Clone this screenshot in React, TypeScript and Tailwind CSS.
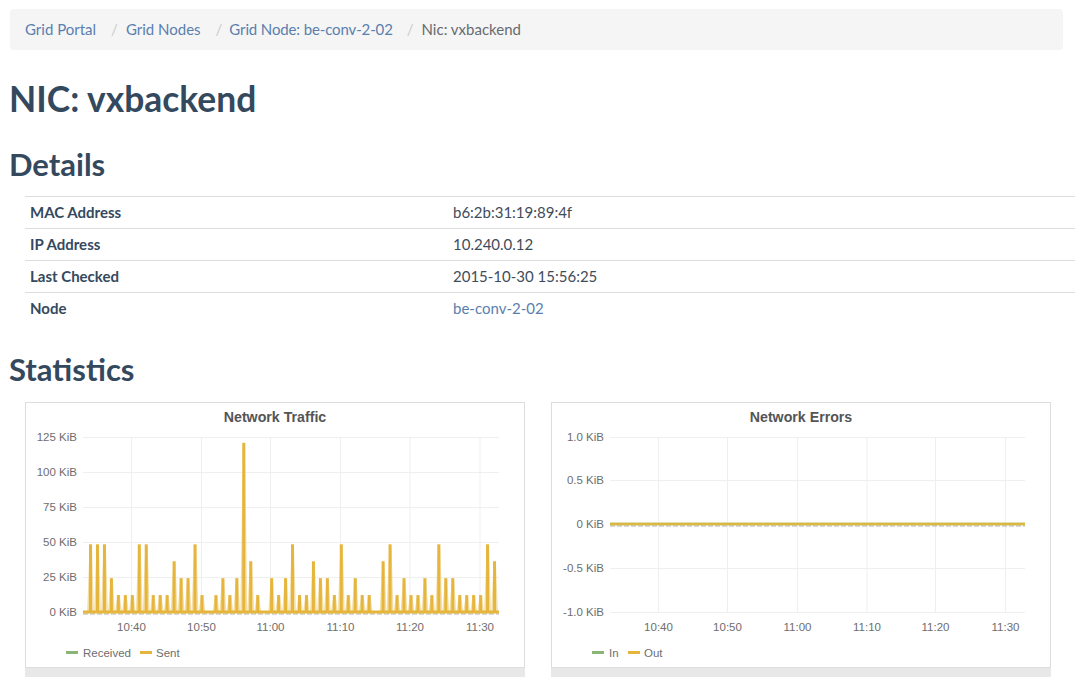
const crumbs = [
  { label: 'Grid Portal', cls: 'pr-[8px] pl-[15px]', link: '' },
  { label: 'Grid Nodes', cls: 'pr-[7px] pl-[15px]', link: '' },
  { label: 'Grid Node: be-conv-2-02', cls: 'pr-[8px] pl-[14px]', link: 'tracking-[-0.13px]' },
];

const rows: [string, string, boolean?][] = [
  ['MAC Address', 'b6:2b:31:19:89:4f'],
  ['IP Address', '10.240.0.12'],
  ['Last Checked', '2015-10-30 15:56:25'],
  ['Node', 'be-conv-2-02', true],
];

// one value per sample, in KiB, read off the reference chart
const traffic = [
  48, 48, 48, 24, 12, 12, 12, 48, 48, 12, 12, 12, 36, 24, 24, 48, 12, 0, 12, 24, 12, 24, 120, 36, 12, 0, 24, 12, 24, 48,
  12, 12, 36, 24, 24, 12, 48, 12, 24, 12, 12, 0, 36, 48, 12, 24, 12, 12, 24, 12, 48, 24, 24, 12, 12, 12, 12, 48, 36,
];

const YELLOW = '#e6b63c';
const GREEN = '#8ab574';
const TEXT = '#6e6e6e';
const GRID = '#efefef';

type ChartProps = {
  title: string;
  yTicks: { label: string; y: number }[];
  xTicks: number[];
  left: number;
  right: number;
  legend: { label: string; color: string; x: number; textX: number }[];
  children: React.ReactNode;
};

const timeLabels = ['10:40', '10:50', '11:00', '11:10', '11:20', '11:30'];

function Chart({ title, yTicks, xTicks, left, right, legend, children }: ChartProps) {
  return (
    <div className="w-[500px] shrink-0 bg-[#e8e8e8] pb-[9px]">
      <div className="h-[266px] border border-[#dddddd] bg-white">
        <div className="h-[20px] pt-[8px] text-center font-['Liberation_Sans',sans-serif] text-[14.2px] leading-[13px] font-bold text-[#555555]">
          {title}
        </div>
        <svg width="498" height="244" className="block font-['Liberation_Sans',sans-serif]">
          {yTicks.map((t) => (
            <g key={t.label}>
              <line x1={left} x2={right} y1={t.y} y2={t.y} stroke={GRID} />
              <text x={left - 6} y={t.y + 3.5} textAnchor="end" fontSize="11.5" fill={TEXT}>
                {t.label}
              </text>
            </g>
          ))}
          {xTicks.map((x, i) => (
            <g key={x}>
              <line x1={x} x2={x} y1={yTicks[0].y} y2={yTicks[yTicks.length - 1].y} stroke={GRID} />
              <text x={x} y="208" textAnchor="middle" fontSize="11.5" fill={TEXT}>
                {timeLabels[i]}
              </text>
            </g>
          ))}
          {children}
          {legend.map((l) => (
            <g key={l.label}>
              <line x1={l.x} x2={l.x + 12} y1="229.5" y2="229.5" stroke={l.color} strokeWidth="3" />
              <text x={l.textX} y="234" fontSize="11.5" fill={TEXT}>
                {l.label}
              </text>
            </g>
          ))}
        </svg>
      </div>
    </div>
  );
}

function TrafficSeries() {
  const base = 189;
  return (
    <g>
      <line x1="57" x2="473" y1={base + 2} y2={base + 2} stroke="#b0b0b0" strokeWidth="1.2" strokeDasharray="5 2" />
      {traffic.map((v, i) => {
        if (!v) return null;
        const x = 64.5 + i * 6.966;
        const top = base - v * 1.41;
        return (
          <g key={i}>
            <polygon
              points={`${x - 3.4},${base} ${x - 1.4},${top + v * 0.3} ${x + 1.4},${top} ${x + 3.4},${base}`}
              fill={YELLOW}
              opacity="0.45"
            />
            <line x1={x} x2={x} y1={base} y2={top} stroke={YELLOW} strokeWidth="3" />
          </g>
        );
      })}
      <line x1="57" x2="473" y1={base} y2={base} stroke={YELLOW} strokeWidth="3" />
    </g>
  );
}

function ErrorSeries() {
  return (
    <g>
      <line x1="58" x2="473" y1="103" y2="103" stroke="#b0b0b0" strokeWidth="1.2" strokeDasharray="5 2" />
      <line x1="58" x2="473" y1="101" y2="101" stroke={GREEN} strokeWidth="2.6" />
      <line x1="58" x2="473" y1="101" y2="101" stroke={YELLOW} strokeWidth="2.6" opacity="0.9" />
    </g>
  );
}

export default function App() {
  return (
    <div className="h-[699px] w-[1075px] overflow-hidden bg-white pt-[9px] pl-[10px] font-['Lato',sans-serif] text-[15px] text-[#3f4c5a]">
      <nav className="flex h-[41px] w-[1053px] items-center rounded bg-[#f5f5f5] px-[15px]">
        {crumbs.map((c) => (
          <span key={c.label} className="flex items-center">
            <a className={`text-[#5a7fae] ${c.link}`}>{c.label}</a>
            <span className={`text-[#cccccc] ${c.cls}`}>/</span>
          </span>
        ))}
        <span className="text-[#666b70]">Nic: vxbackend</span>
      </nav>

      <h1 className="mt-[27px] -ml-px text-[35.4px] leading-[44px] font-bold text-[#34495e]">NIC: vxbackend</h1>
      <h2 className="mt-[25px] -ml-px text-[31px] leading-[36px] font-bold text-[#34495e]">Details</h2>

      <table className="mt-[14px] ml-[15px] w-[1065px] table-fixed border-collapse">
        <tbody>
          {rows.map(([k, v, link], i) => (
            <tr key={k} className={i === rows.length - 1 ? 'h-[31px] border-t border-[#dddddd]' : 'h-[32px] border-y border-[#dddddd]'}>
              <th className="w-[428px] pl-[5px] text-left font-bold text-[#34495e]">{k}</th>
              <td className={link ? 'text-[#5a7fae]' : ''}>{v}</td>
            </tr>
          ))}
        </tbody>
      </table>

      <h2 className="mt-[27px] -ml-px text-[31px] leading-[36px] font-bold text-[#34495e]">Statistics</h2>

      <div className="mt-[15px] ml-[15px] flex gap-[26px]">
        <Chart
          title="Network Traffic"
          left={57}
          right={473}
          xTicks={[105.5, 175.5, 244.5, 314.5, 384, 454]}
          yTicks={[
            { label: '125 KiB', y: 14.5 },
            { label: '100 KiB', y: 49.5 },
            { label: '75 KiB', y: 84.5 },
            { label: '50 KiB', y: 119.5 },
            { label: '25 KiB', y: 154.5 },
            { label: '0 KiB', y: 189.5 },
          ]}
          legend={[
            { label: 'Received', color: GREEN, x: 40, textX: 57 },
            { label: 'Sent', color: YELLOW, x: 114, textX: 130 },
          ]}
        >
          <TrafficSeries />
        </Chart>
        <Chart
          title="Network Errors"
          left={58}
          right={473}
          xTicks={[106.5, 175.5, 245.5, 315, 383.5, 453.5]}
          yTicks={[
            { label: '1.0 KiB', y: 14.5 },
            { label: '0.5 KiB', y: 57.5 },
            { label: '0 KiB', y: 101.5 },
            { label: '-0.5 KiB', y: 145.5 },
            { label: '-1.0 KiB', y: 189.5 },
          ]}
          legend={[
            { label: 'In', color: GREEN, x: 40, textX: 57 },
            { label: 'Out', color: YELLOW, x: 76, textX: 92 },
          ]}
        >
          <ErrorSeries />
        </Chart>
      </div>
    </div>
  );
}
